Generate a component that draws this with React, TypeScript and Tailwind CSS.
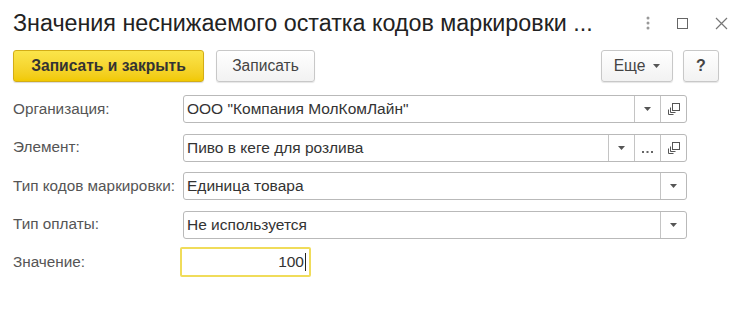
import React from "react";

const font = { fontFamily: '"Liberation Sans", Arial, sans-serif' };

// маленький треугольник выпадающего списка
const Caret = () => (
  <svg width="7" height="4" viewBox="0 0 7 4">
    <path d="M0 0h7L3.5 4z" fill="#555" />
  </svg>
);

const OpenIcon = () => (
  <svg width="12" height="12" viewBox="0 0 12 12" fill="none" stroke="#555" strokeWidth="1">
    <rect x="4.5" y="0.5" width="7" height="7" />
    <path d="M2.5 4.5v5h5" />
    <path d="M0.5 6.5v5h5" />
  </svg>
);

const Dots = () => (
  <svg width="11" height="3" viewBox="0 0 11 3" className="mt-[8px]">
    <rect x="0" y="1" width="2" height="2" fill="#666" />
    <rect x="4.5" y="1" width="2" height="2" fill="#666" />
    <rect x="9" y="1" width="2" height="2" fill="#666" />
  </svg>
);

const Field = ({ value, buttons }: { value: string; buttons: ("drop" | "dots" | "open")[] }) => (
  <div className="flex w-[504px] h-[28px] border border-[#b9b9b9] rounded-[3px] bg-white">
    <div className="flex-1 flex items-center pl-[3px] text-[15.5px] text-[#333] leading-none">{value}</div>
    {buttons.map((b, i) => (
      <div key={i} className="w-[26px] flex items-center justify-center border-l border-[#c4c4c4]">
        {b === "drop" && <Caret />}
        {b === "dots" && <Dots />}
        {b === "open" && <OpenIcon />}
      </div>
    ))}
  </div>
);

const Row = ({ label, children, className = "" }: { label: string; children: React.ReactNode; className?: string }) => (
  <div className={`flex items-center ${className}`}>
    <div className="w-[170px] text-[15.3px] text-[#555] whitespace-nowrap">{label}</div>
    {children}
  </div>
);

export default function App() {
  return (
    <div className="w-[742px] h-[314px] bg-white relative" style={font}>
      {/* заголовок окна */}
      <div className="flex items-center h-[46px] pl-[13px] pr-[14px]">
        <div className="flex-1 text-[23.3px] text-[#222] whitespace-nowrap">
          Значения неснижаемого остатка кодов маркировки ...
        </div>
        <div className="flex items-center gap-[27px] text-[#888]">
          <svg width="4" height="14" viewBox="0 0 4 14">
            <circle cx="2" cy="2" r="1.5" fill="#999" />
            <circle cx="2" cy="7" r="1.5" fill="#999" />
            <circle cx="2" cy="12" r="1.5" fill="#999" />
          </svg>
          <svg width="11" height="11" viewBox="0 0 11 11">
            <rect x="0.5" y="0.5" width="10" height="10" fill="none" stroke="#666" />
          </svg>
          <svg width="13" height="13" viewBox="0 0 13 13">
            <path d="M1 1l11 11M12 1L1 12" stroke="#777" strokeWidth="1.2" />
          </svg>
        </div>
      </div>

      {/* командная панель */}
      <div className="flex items-center h-[32px] mt-[4px] px-[13px]">
        <button className="h-[32px] w-[191px] rounded-[3px] border border-[#d3ad16] bg-gradient-to-b from-[#fbe54a] to-[#f1c900] text-[15.6px] font-bold text-[#333] shadow-[0_1px_1px_rgba(0,0,0,0.15)]">
          Записать и закрыть
        </button>
        <button className="h-[32px] w-[99px] ml-[12px] rounded-[3px] border border-[#c8c8c8] bg-gradient-to-b from-white to-[#f2f2f2] text-[15.6px] text-[#444] shadow-[0_1px_1px_rgba(0,0,0,0.1)]">
          Записать
        </button>
        <div className="flex-1" />
        <button className="h-[32px] w-[72px] rounded-[3px] border border-[#c8c8c8] bg-gradient-to-b from-white to-[#f2f2f2] text-[15.6px] text-[#444] flex items-center justify-center gap-[8px] shadow-[0_1px_1px_rgba(0,0,0,0.1)]">
          Еще <Caret />
        </button>
        <button className="h-[32px] w-[36px] ml-[10px] mr-[10px] rounded-[3px] border border-[#c8c8c8] bg-gradient-to-b from-white to-[#f2f2f2] text-[16px] font-bold text-[#444] shadow-[0_1px_1px_rgba(0,0,0,0.1)]">
          ?
        </button>
      </div>

      {/* поля формы */}
      <div className="flex flex-col gap-[10.5px] mt-[13px] pl-[13px]">
        <Row label="Организация:">
          <Field value={'ООО "Компания МолКомЛайн"'} buttons={["drop", "open"]} />
        </Row>
        <Row label="Элемент:">
          <Field value="Пиво в кеге для розлива" buttons={["drop", "dots", "open"]} />
        </Row>
        <Row label="Тип кодов маркировки:">
          <Field value="Единица товара" buttons={["drop"]} />
        </Row>
        <Row label="Тип оплаты:">
          <Field value="Не используется" buttons={["drop"]} />
        </Row>
        <Row label="Значение:" className="-mt-[2px]">
          <div className="-ml-[3px] w-[131px] h-[30px] border-2 border-[#f0dc5a] rounded-[2px] flex items-center justify-end pr-[3px] text-[15.5px] text-[#333]">
            100<span className="w-px h-[18px] bg-[#222] ml-[1px]" />
          </div>
        </Row>
      </div>
    </div>
  );
}
